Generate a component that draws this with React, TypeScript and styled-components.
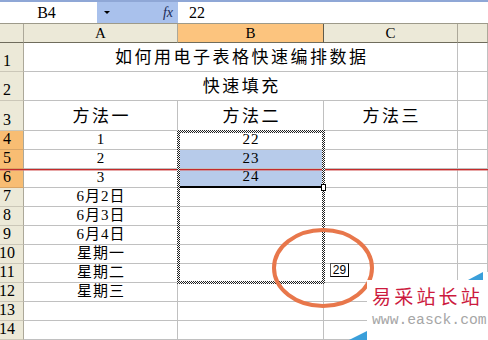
import React from "react";
import styled, { createGlobalStyle } from "styled-components";

const Global = createGlobalStyle`
  html, body { margin: 0; padding: 0; background: #fff; }
  body { width: 488px; height: 340px; overflow: hidden; }
`;

const latin = `"Liberation Serif", "Noto Sans CJK SC", serif`;

const Sheet = styled.div`
  position: relative;
  width: 488px;
  height: 340px;
  overflow: hidden;
  background: #fff;
  font-family: ${latin};
  color: #000;
`;

const FormulaBar = styled.div`
  display: flex;
  height: 24px;
  box-sizing: border-box;
  border-top: 2px solid #8fa7d6;
  border-bottom: 1px solid #9d9a8a;
`;

const NameBox = styled.div`
  width: 97px;
  display: flex;
  align-items: center;
  justify-content: center;
  font-size: 16px;
  padding-right: 4px;
  box-sizing: border-box;
`;

const NameDrop = styled.div`
  width: 81px;
  background: #a9c1ec;
  display: flex;
  align-items: center;
  justify-content: space-between;
  padding: 0 5px 0 7px;
  box-sizing: border-box;
`;

const DropArrow = styled.span`
  width: 0;
  height: 0;
  border-left: 3px solid transparent;
  border-right: 3px solid transparent;
  border-top: 3px solid #000;
`;

const Fx = styled.span`
  font-style: italic;
  font-size: 14px;
  color: #1b2a55;
`;

const FormulaInput = styled.div`
  flex: 1;
  padding-left: 11px;
  display: flex;
  align-items: center;
  font-size: 16px;
`;

const Grid = styled.div`
  display: grid;
  grid-template-columns: 24px 154px 146px 134px 1fr;
  grid-template-rows: 19px 29px 29px 30px repeat(11, 19px);
`;

const ColHead = styled.div<{ $sel?: boolean }>`
  box-sizing: border-box;
  background: ${(p) => (p.$sel ? "#fcc47e" : "#ece9d8")};
  border-right: 1px solid ${(p) => (p.$sel ? "#5f5b4c" : "#aca899")};
  border-bottom: 1px solid #6f6c5c;
  display: flex;
  align-items: center;
  justify-content: center;
  font-size: 15px;
  line-height: 1;
`;

const RowHead = styled.div<{ $sel?: boolean }>`
  box-sizing: border-box;
  background: ${(p) => (p.$sel ? "#f8bd73" : "#ece9d8")};
  border-right: 1px solid #aca899;
  border-bottom: 1px solid ${(p) => (p.$sel ? "#d9a566" : "#cbc7b8")};
  display: flex;
  align-items: flex-end;
  justify-content: center;
  padding: 0 9px 2px 0;
  font-size: 16px;
  line-height: 1;
`;

const Cell = styled.div<{
  $span?: number;
  $fill?: boolean;
  $big?: boolean;
  $selBottom?: boolean;
}>`
  grid-column: span ${(p) => p.$span ?? 1};
  box-sizing: border-box;
  background: ${(p) => (p.$fill ? "#b7cbea" : "#fff")};
  border-right: 1px solid #c0c0c0;
  border-bottom: ${(p) => (p.$selBottom ? "2px solid #000" : "1px solid #c0c0c0")};
  display: flex;
  align-items: flex-end;
  justify-content: center;
  white-space: nowrap;
  font-size: ${(p) => (p.$big ? "17px" : "15px")};
  letter-spacing: ${(p) => (p.$big ? "2.5px" : "1px")};
  padding-left: ${(p) => (p.$big ? "2.5px" : "1px")};
  padding-bottom: ${(p) => (p.$big ? "5px" : "2px")};
  line-height: 1;
`;

const RedLine = styled.div`
  position: absolute;
  left: 0;
  right: 0;
  top: 169px;
  height: 1px;
  background: #c52a2a;
  box-shadow: 0 1px 0 rgba(215, 110, 110, 0.6);
`;

const Ants = styled.div`
  position: absolute;
  left: 177px;
  top: 130px;
  width: 148px;
  height: 154px;
  box-sizing: border-box;
  padding: 3px;
  background: repeating-conic-gradient(#222 0 25%, #fff 0 50%) 0 0 / 2px 2px;
  -webkit-mask: linear-gradient(#000 0 0) content-box, linear-gradient(#000 0 0);
  -webkit-mask-composite: xor;
  mask-composite: exclude;
`;

const FillHandle = styled.div`
  position: absolute;
  left: 321px;
  top: 184px;
  width: 5px;
  height: 7px;
  box-sizing: border-box;
  border: 1px solid #000;
  background: #fff;
`;

const Ring = styled.svg`
  position: absolute;
  left: 271px;
  top: 227px;
  width: 104px;
  height: 82px;
`;

const Tip = styled.div`
  position: absolute;
  left: 330px;
  top: 263px;
  width: 19px;
  height: 14px;
  box-sizing: border-box;
  border: 1px solid #555;
  border-right-color: #000;
  border-bottom-color: #000;
  background: #fff;
  font-family: "Liberation Sans", sans-serif;
  font-size: 12px;
  line-height: 12px;
  text-align: center;
`;

const Watermark = styled.div`
  position: absolute;
  left: 349px;
  top: 270px;
  width: 139px;
  height: 70px;
  overflow: hidden;
`;

const WatermarkArt = styled.svg`
  position: absolute;
  left: 0;
  top: 0;
  width: 139px;
  height: 70px;
`;

const WatermarkText = styled.div`
  position: relative;
  display: flex;
  flex-direction: column;
  gap: 5px;
  padding: 15px 0 0 23px;
  white-space: nowrap;
`;

const BrandName = styled.span`
  font-family: "Noto Sans CJK SC", sans-serif;
  font-size: 19px;
  line-height: 22px;
  letter-spacing: 3.2px;
  color: #cc1a3e;
`;

const BrandUrl = styled.span`
  font-family: "Liberation Mono", monospace;
  font-size: 14.7px;
  line-height: 16px;
  color: #a6a6a6;
`;

type Row = {
  n: number;
  sel?: boolean;
  cells: { text?: string; span?: number; fill?: boolean; big?: boolean; selBottom?: boolean }[];
};

const rows: Row[] = [
  { n: 1, cells: [{ text: "如何用电子表格快速编排数据", span: 3, big: true }, {}] },
  { n: 2, cells: [{ text: "快速填充", span: 3, big: true }, {}] },
  {
    n: 3,
    cells: [
      { text: "方法一", big: true },
      { text: "方法二", big: true },
      { text: "方法三", big: true },
      {},
    ],
  },
  { n: 4, sel: true, cells: [{ text: "1" }, { text: "22" }, {}, {}] },
  { n: 5, sel: true, cells: [{ text: "2" }, { text: "23", fill: true }, {}, {}] },
  { n: 6, sel: true, cells: [{ text: "3" }, { text: "24", fill: true, selBottom: true }, {}, {}] },
  { n: 7, cells: [{ text: "6月2日" }, {}, {}, {}] },
  { n: 8, cells: [{ text: "6月3日" }, {}, {}, {}] },
  { n: 9, cells: [{ text: "6月4日" }, {}, {}, {}] },
  { n: 10, cells: [{ text: "星期一" }, {}, {}, {}] },
  { n: 11, cells: [{ text: "星期二" }, {}, {}, {}] },
  { n: 12, cells: [{ text: "星期三" }, {}, {}, {}] },
  { n: 13, cells: [{}, {}, {}, {}] },
  { n: 14, cells: [{}, {}, {}, {}] },
];

export default function App() {
  return (
    <>
      <Global />
      <Sheet>
        <FormulaBar>
          <NameBox>B4</NameBox>
          <NameDrop>
            <DropArrow />
            <Fx>fx</Fx>
          </NameDrop>
          <FormulaInput>22</FormulaInput>
        </FormulaBar>
        <Grid>
          <ColHead />
          <ColHead>A</ColHead>
          <ColHead $sel>B</ColHead>
          <ColHead>C</ColHead>
          <ColHead />
          {rows.map((r) => (
            <React.Fragment key={r.n}>
              <RowHead $sel={r.sel}>{r.n}</RowHead>
              {r.cells.map((c, i) => (
                <Cell
                  key={i}
                  $span={c.span}
                  $fill={c.fill}
                  $big={c.big}
                  $selBottom={c.selBottom}
                >
                  {c.text}
                </Cell>
              ))}
            </React.Fragment>
          ))}
        </Grid>
        <RedLine />
        <Ants />
        <FillHandle />
        <Ring viewBox="0 0 104 82">
          <ellipse cx="52" cy="41" rx="49" ry="38" fill="none" stroke="#e8774b" strokeWidth="4" />
        </Ring>
        <Tip>29</Tip>
        <Watermark>
          <WatermarkArt viewBox="0 0 139 70">
            <polygon points="18,10 134,10 134,2 139,2 139,70 18,70" fill="#fff" />
            <polygon points="119,10 134,2 134,10" fill="#3a9fda" />
            <polygon points="0,70 18,61 18,70" fill="#3a9fda" />
          </WatermarkArt>
          <WatermarkText>
            <BrandName>易采站长站</BrandName>
            <BrandUrl>www.easck.com</BrandUrl>
          </WatermarkText>
        </Watermark>
      </Sheet>
    </>
  );
}
